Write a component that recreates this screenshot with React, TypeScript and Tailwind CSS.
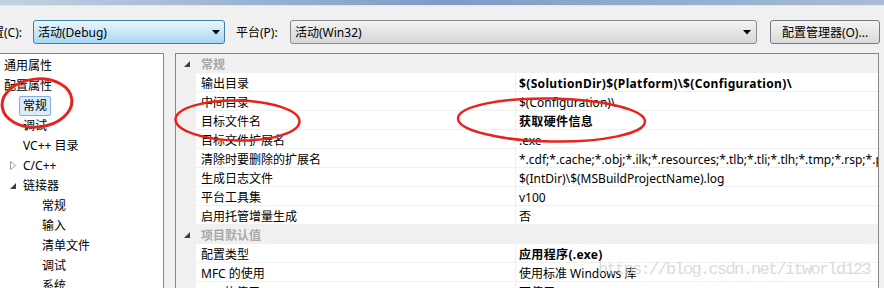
import React from "react";

type Row = { kind: "cat"; label: string } | { kind: "prop"; name: string; value: string; bold?: boolean };

const rows: Row[] = [
  { kind: "cat", label: "常规" },
  { kind: "prop", name: "输出目录", value: "$(SolutionDir)$(Platform)\\$(Configuration)\\", bold: true },
  { kind: "prop", name: "中间目录", value: "$(Configuration)\\" },
  { kind: "prop", name: "目标文件名", value: "获取硬件信息", bold: true },
  { kind: "prop", name: "目标文件扩展名", value: ".exe" },
  {
    kind: "prop",
    name: "清除时要删除的扩展名",
    value: "*.cdf;*.cache;*.obj;*.ilk;*.resources;*.tlb;*.tli;*.tlh;*.tmp;*.rsp;*.pgc;*.pgd;*.meta",
  },
  { kind: "prop", name: "生成日志文件", value: "$(IntDir)\\$(MSBuildProjectName).log" },
  { kind: "prop", name: "平台工具集", value: "v100" },
  { kind: "prop", name: "启用托管增量生成", value: "否" },
  { kind: "cat", label: "项目默认值" },
  { kind: "prop", name: "配置类型", value: "应用程序(.exe)", bold: true },
  { kind: "prop", name: "MFC 的使用", value: "使用标准 Windows 库" },
  { kind: "prop", name: "ATL 的使用", value: "不使用 ATL" },
];

const tree = [
  { label: "通用属性", indent: 4 },
  { label: "配置属性", indent: 4 },
  { label: "常规", indent: 23, selected: true },
  { label: "调试", indent: 23 },
  { label: "VC++ 目录", indent: 23 },
  { label: "C/C++", indent: 23, icon: "closed" },
  { label: "链接器", indent: 23, icon: "open" },
  { label: "常规", indent: 42 },
  { label: "输入", indent: 42 },
  { label: "清单文件", indent: 42 },
  { label: "调试", indent: 42 },
  { label: "系统", indent: 42 },
];

function OpenArrow() {
  return (
    <svg width="6" height="6" viewBox="0 0 6 6">
      <polygon points="6,0 6,6 0,6" fill="#404040" />
    </svg>
  );
}

function ClosedArrow() {
  return (
    <svg width="6" height="9" viewBox="0 0 6 9">
      <polygon points="0.5,0.5 5.5,4.5 0.5,8.5" fill="none" stroke="#a0a0a0" />
    </svg>
  );
}

function DropArrow() {
  return (
    <svg width="8" height="5" viewBox="0 0 8 5">
      <polygon points="0,0 8,0 4,4.5" fill="#000" />
    </svg>
  );
}

export default function App() {
  return (
    <div
      className="relative w-[884px] h-[288px] overflow-hidden bg-[#f0f0f0] text-[12px] text-black"
      style={{ fontFamily: '"Noto Sans", "Noto Sans CJK SC", sans-serif' }}
    >
      <div className="h-[6px] bg-gradient-to-r from-[#c3d1e2] via-[#7c9cc6] to-[#a8bcd6] border-b border-[#dfe6ee]" />

      <div className="flex items-center mt-[14px] h-[24px]">
        <div className="w-[22px] flex justify-end overflow-hidden whitespace-nowrap pt-[1px]">配置(C):</div>
        <div className="ml-[11px] w-[192px] h-[24px] flex items-center justify-between pl-[4px] pr-[4px] rounded-[3px] border border-[#3c7fb1] bg-gradient-to-b from-[#eaf6fd] to-[#a7d8f4]">
          <span className="pt-[1px]">活动(Debug)</span>
          <DropArrow />
        </div>
        <div className="ml-[11px] w-[44px] whitespace-nowrap pt-[1px]">平台(P):</div>
        <div className="ml-[10px] w-[467px] h-[24px] flex items-center justify-between pl-[4px] pr-[5px] rounded-[3px] border border-[#8a8a8a] bg-gradient-to-b from-[#f3f3f3] to-[#d6d6d6]">
          <span className="pt-[1px]">活动(Win32)</span>
          <DropArrow />
        </div>
        <div className="ml-[13px] w-[110px] h-[24px] flex items-center justify-center rounded-[3px] border border-[#7a7a7a] bg-gradient-to-b from-[#f4f4f4] to-[#dadada] pt-[1px]">
          配置管理器(O)...
        </div>
      </div>

      <div className="flex mt-[9px] h-[240px]">
        <div className="w-[164px] h-full bg-white border-t border-r border-[#828790] overflow-hidden">
          {tree.map((t, i) => (
            <div
              key={i}
              className="relative h-[20px] flex items-center whitespace-nowrap pt-[3px]"
              style={{ paddingLeft: t.indent }}
            >
              {t.icon === "open" && (
                <span className="absolute left-[10px] top-[9px]">
                  <OpenArrow />
                </span>
              )}
              {t.icon === "closed" && (
                <span className="absolute left-[10px] top-[7px]">
                  <ClosedArrow />
                </span>
              )}
              {t.selected ? (
                <span className="-ml-[4px] px-[3px] h-[20px] leading-[18px] rounded-[2px] border border-[#84acdd] bg-[#dcebfc]">
                  {t.label}
                </span>
              ) : (
                <span>{t.label}</span>
              )}
            </div>
          ))}
        </div>

        <div className="ml-[11px] w-[704px] h-full bg-white border border-[#828790] overflow-hidden">
          {rows.map((r, i) =>
            r.kind === "cat" ? (
              <div key={i} className="h-[19px] flex items-center bg-[#f0f0f0]">
                <div className="w-[20px] flex justify-center pl-[1px]">
                  <OpenArrow />
                </div>
                <div className="pl-[5px] pt-[2px] text-[#a8a8a8] font-semibold">{r.label}</div>
              </div>
            ) : (
              <div key={i} className="h-[19px] flex">
                <div className="w-[20px] shrink-0 bg-[#f0f0f0]" />
                <div className="w-[320px] shrink-0 pl-[5px] pt-[1px] leading-[19px] border-b border-r border-[#f0f0f0] whitespace-nowrap overflow-hidden">
                  {r.name}
                </div>
                <div
                  className={`flex-1 pl-[3px] pt-[1px] leading-[19px] border-b border-[#f0f0f0] whitespace-nowrap overflow-hidden ${
                    r.bold ? "font-bold tracking-[0.35px]" : ""
                  }`}
                >
                  {r.value}
                </div>
              </div>
            )
          )}
        </div>
      </div>

      <div
        className="absolute left-[598px] top-[257px] text-[17px] tracking-[-1.7px] text-[#cfcfcf] opacity-75 whitespace-nowrap pointer-events-none"
        style={{ fontFamily: '"Liberation Mono", monospace' }}
      >
        https://blog.csdn.net/itworld123
      </div>

      <svg className="absolute inset-0 pointer-events-none" width="884" height="288">
        <ellipse cx="37" cy="103" rx="35" ry="24" fill="none" stroke="#e8221d" strokeWidth="3" transform="rotate(-6 37 103)" />
        <ellipse cx="237.5" cy="120.5" rx="62" ry="20" fill="none" stroke="#e8221d" strokeWidth="2.5" transform="rotate(1 237.5 120.5)" />
        <ellipse cx="551.5" cy="120" rx="93.5" ry="21.5" fill="none" stroke="#e8221d" strokeWidth="2.5" transform="rotate(1 551.5 120)" />
      </svg>
    </div>
  );
}
